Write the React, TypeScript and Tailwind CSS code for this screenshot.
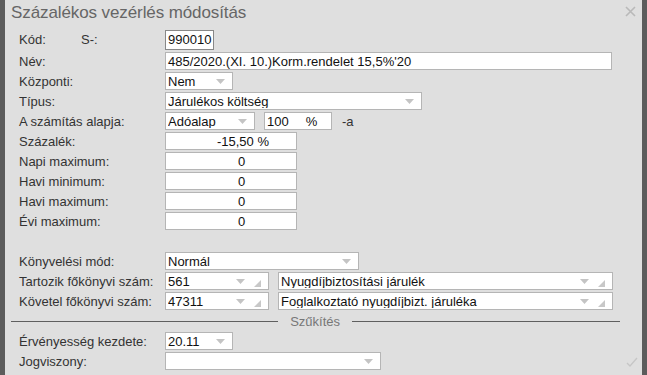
import React from 'react';

const Caret = () => (
    <svg width="9" height="5" viewBox="0 0 9 5" className="shrink-0">
        <path d="M0 0 L9 0 L4.5 5 Z" fill="#c4c4c4" />
    </svg>
);

const Grip = () => (
    <svg width="7" height="7" viewBox="0 0 7 7" className="shrink-0">
        <path d="M7 0 L7 7 L0 7 Z" fill="#c8c8c8" />
    </svg>
);

type SelProps = { value?: string; width: string; grip?: boolean };

const Select: React.FC<SelProps> = ({ value = '', width, grip }) => (
    <div className={`${width} h-[18px] bg-white border border-[#b5b5b5] flex items-center pl-[2px] pr-[7px]`}>
        <span className="flex-1 truncate text-[#111]">{value}</span>
        <Caret />
        {grip && <span className="ml-[9px] mt-[5px]"><Grip /></span>}
    </div>
);

const NumBox: React.FC<{ value: string }> = ({ value }) => (
    <div className="w-[132px] h-[18px] bg-white border border-[#b5b5b5] flex items-center justify-center pl-[21px] text-[#111]">
        {value}
    </div>
);

const Row: React.FC<{ label: string; children?: React.ReactNode }> = ({ label, children }) => (
    <div className="flex items-center h-[20px]">
        <div className="w-[146px] shrink-0 text-[#333]">{label}</div>
        {children}
    </div>
);

const App: React.FC = () => {
    return (
        <div className="w-[647px] h-[375px] bg-[#5c5c5c] px-[5px] overflow-hidden" style={{ fontFamily: '"Liberation Sans", Arial, sans-serif' }}>
            <div className="relative h-full bg-[#dfdfdf] text-[13px] leading-none">
                {/* title */}
                <div className="flex items-center justify-between h-[25px] pl-[6px] pr-[6px]">
                    <span className="text-[17px] text-[#666] tracking-[-0.1px]">Százalékos vezérlés módosítás</span>
                    <svg width="11" height="11" viewBox="0 0 11 11" className="mt-[-2px]">
                        <path d="M1 1 L10 10 M10 1 L1 10" stroke="#b9b9b9" strokeWidth="1.6" />
                    </svg>
                </div>

                <div className="pl-[14px] pt-[3px]">
                    <div className="flex items-center h-[23px]">
                        <div className="w-[62px] text-[#333]">Kód:</div>
                        <div className="w-[84px] text-[#333]">S-:</div>
                        <div className="w-[49px] h-[20px] bg-white border border-[#888] flex items-center pl-[2px] text-[#111]">990010</div>
                    </div>
                    <Row label="Név:">
                        <div className="w-[447px] h-[18px] bg-white border border-[#b5b5b5] flex items-center pl-[2px] text-[#111]">
                            485/2020.(XI. 10.)Korm.rendelet 15,5%'20
                        </div>
                    </Row>
                    <Row label="Központi:">
                        <Select value="Nem" width="w-[68px]" />
                    </Row>
                    <Row label="Típus:">
                        <Select value="Járulékos költség" width="w-[257px]" />
                    </Row>
                    <Row label="A számítás alapja:">
                        <Select value="Adóalap" width="w-[90px]" />
                        <div className="ml-[9px] w-[68px] h-[18px] bg-white border border-[#b5b5b5] flex items-center pl-[2px] text-[#111]">
                            <span>100</span>
                            <span className="ml-[17px]">%</span>
                        </div>
                        <span className="ml-[10px] text-[#333]">-a</span>
                    </Row>
                    <Row label="Százalék:">
                        <div className="w-[132px] h-[18px] bg-white border border-[#b5b5b5] flex items-center justify-end pr-[27px] text-[#111]">
                            -15,50 %
                        </div>
                    </Row>
                    <Row label="Napi maximum:"><NumBox value="0" /></Row>
                    <Row label="Havi minimum:"><NumBox value="0" /></Row>
                    <Row label="Havi maximum:"><NumBox value="0" /></Row>
                    <Row label="Évi maximum:"><NumBox value="0" /></Row>

                    <div className="h-[20px]" />

                    <Row label="Könyvelési mód:">
                        <Select value="Normál" width="w-[194px]" />
                    </Row>
                    <Row label="Tartozik főkönyvi szám:">
                        <Select value="561" width="w-[104px]" grip />
                        <div className="ml-[9px]"><Select value="Nyugdíjbiztosítási járulék" width="w-[335px]" grip /></div>
                    </Row>
                    <Row label="Követel főkönyvi szám:">
                        <Select value="47311" width="w-[104px]" grip />
                        <div className="ml-[9px]"><Select value="Foglalkoztató nyugdíjbizt. járuléka" width="w-[335px]" grip /></div>
                    </Row>

                    {/* divider */}
                    <div className="flex items-center h-[20px] ml-[-8px] mr-[22px]">
                        <div className="flex-1 h-px bg-[#5f5f5f]" />
                        <span className="px-[12px] text-[#777]">Szűkítés</span>
                        <div className="w-[268px] h-px bg-[#5f5f5f]" />
                    </div>

                    <Row label="Érvényesség kezdete:">
                        <Select value="20.11" width="w-[68px]" />
                    </Row>
                    <Row label="Jogviszony:">
                        <Select width="w-[216px]" />
                    </Row>
                </div>

                <svg width="12" height="10" viewBox="0 0 12 10" className="absolute right-[4px] bottom-[8px]">
                    <path d="M1 6 L4 9 L11 1" stroke="#c6c6c6" strokeWidth="1.3" fill="none" />
                </svg>
            </div>
        </div>
    );
};

export default App;
